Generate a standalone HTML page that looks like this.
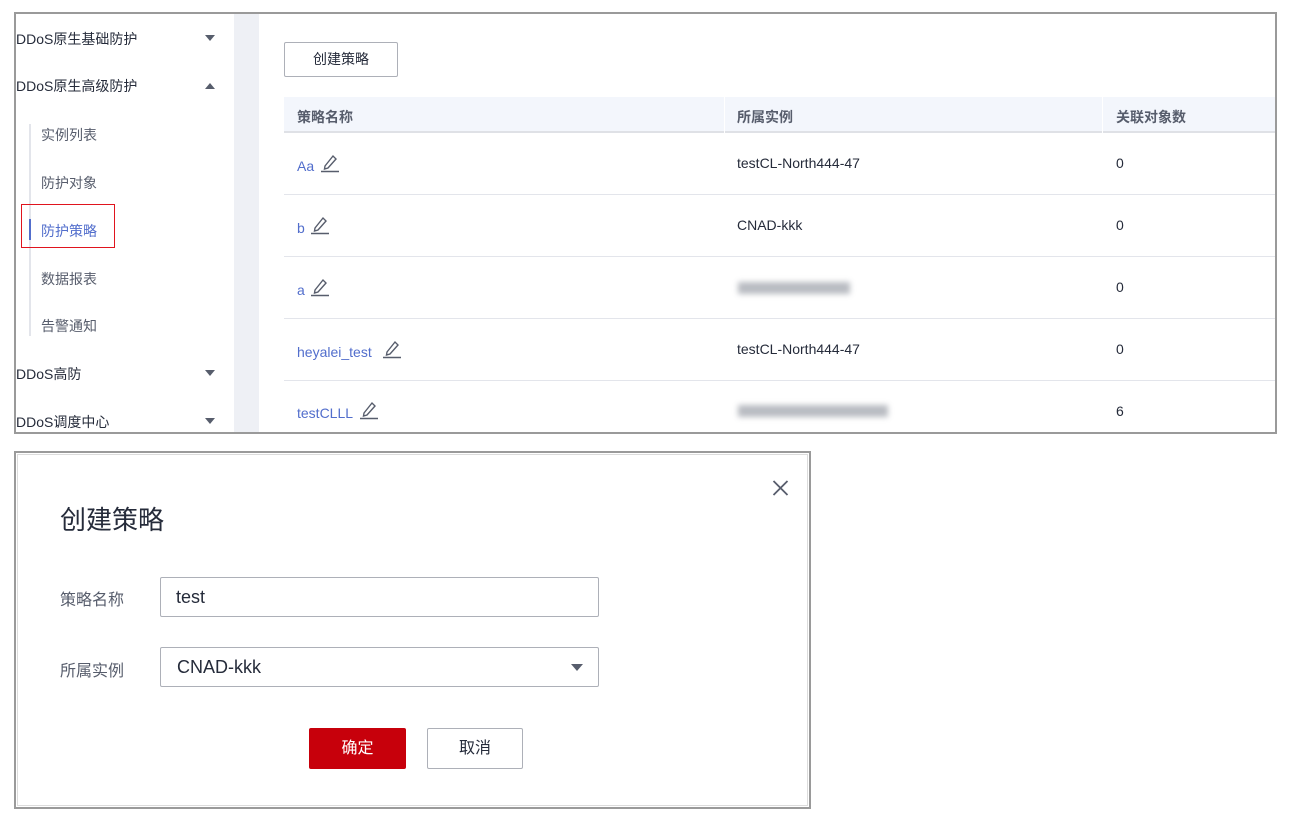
<!DOCTYPE html>
<html><head><meta charset="utf-8"><style>
*{margin:0;padding:0;box-sizing:border-box}
body{width:1292px;height:821px;background:#fff;position:relative;overflow:hidden;font-family:"Liberation Sans","Noto Sans CJK SC",sans-serif;color:#252b3a}
.a{position:absolute;white-space:nowrap}
.top{position:absolute;left:14px;top:12px;width:1263px;height:422px;border:2px solid #9a9a9a;overflow:hidden}
.side{position:absolute;left:0;top:0;width:218px;height:420px;background:#fff}
.strip{position:absolute;left:218px;top:0;width:25px;height:420px;background:#eef0f5}
.nav{font-size:14px;color:#252b3a}
.sub{font-size:14px;color:#575d6c}
.tri{position:absolute;width:0;height:0;border-left:5px solid transparent;border-right:5px solid transparent}
.dn{border-top:6px solid #575d6c}
.up{border-bottom:6px solid #575d6c}
.th{font-size:14px;color:#575d6c;font-weight:bold}
.td{font-size:14px;color:#252b3a}
.lk{font-size:14px;color:#526ecc}
.row{position:absolute;left:268px;width:995px;height:1px;background:#e3e5eb}
.blur{position:absolute;height:12px;background:#8a8f99;filter:blur(3px);opacity:.6}
</style></head><body>
<div class="top">
 <div class="side">
  <div class="a nav" style="left:0;top:15px">DDoS原生基础防护</div>
  <div class="tri dn" style="left:189px;top:21px"></div>
  <div class="a nav" style="left:0;top:62px">DDoS原生高级防护</div>
  <div class="tri up" style="left:189px;top:69px"></div>
  <div style="position:absolute;left:13px;top:110px;width:2px;height:212px;background:#e3e5eb"></div>
  <div style="position:absolute;left:13px;top:205px;width:2px;height:21px;background:#526ecc"></div>
  <div class="a sub" style="left:25px;top:111px">实例列表</div>
  <div class="a sub" style="left:25px;top:159px">防护对象</div>
  <div style="position:absolute;left:5px;top:190px;width:94px;height:44px;border:1px solid #e0141e"></div>
  <div class="a sub" style="left:25px;top:207px;color:#526ecc">防护策略</div>
  <div class="a sub" style="left:25px;top:255px">数据报表</div>
  <div class="a sub" style="left:25px;top:302px">告警通知</div>
  <div class="a nav" style="left:0;top:350px">DDoS高防</div>
  <div class="tri dn" style="left:189px;top:356px"></div>
  <div class="a nav" style="left:0;top:398px">DDoS调度中心</div>
  <div class="tri dn" style="left:189px;top:404px"></div>
 </div>
 <div class="strip"></div>
 <div style="position:absolute;left:268px;top:28px;width:114px;height:35px;border:1px solid #adb0b8;border-radius:2px;font-size:14px;text-align:center;line-height:33px">创建策略</div>
 <div style="position:absolute;left:268px;top:83px;width:995px;height:36px;background:#f3f6fc;border-bottom:2px solid #dfe1e6"></div>
 <div style="position:absolute;left:708px;top:83px;width:1px;height:36px;background:#fff"></div>
 <div style="position:absolute;left:1086px;top:83px;width:1px;height:36px;background:#fff"></div>
 <div class="a th" style="left:281px;top:93px">策略名称</div>
 <div class="a th" style="left:721px;top:93px">所属实例</div>
 <div class="a th" style="left:1100px;top:93px">关联对象数</div>
 <div class="row" style="top:180px"></div>
 <div class="row" style="top:242px"></div>
 <div class="row" style="top:304px"></div>
 <div class="row" style="top:366px"></div>

 <div class="a lk" style="left:281px;top:144px">Aa</div>
 <div class="a lk" style="left:281px;top:206px">b</div>
 <div class="a lk" style="left:281px;top:268px">a</div>
 <div class="a lk" style="left:281px;top:330px">heyalei_test</div>
 <div class="a lk" style="left:281px;top:391px">testCLLL</div>

 <svg class="a" style="left:304px;top:139px" width="20" height="20" viewBox="0 0 20 20"><path d="M5 13 L13 3 L16 6 L8 15 L4.5 16 Z" fill="none" stroke="#575d6c" stroke-width="1.4"/><path d="M1 18.5 H19" stroke="#575d6c" stroke-width="1.6"/></svg>
 <svg class="a" style="left:294px;top:201px" width="20" height="20" viewBox="0 0 20 20"><path d="M5 13 L13 3 L16 6 L8 15 L4.5 16 Z" fill="none" stroke="#575d6c" stroke-width="1.4"/><path d="M1 18.5 H19" stroke="#575d6c" stroke-width="1.6"/></svg>
 <svg class="a" style="left:294px;top:263px" width="20" height="20" viewBox="0 0 20 20"><path d="M5 13 L13 3 L16 6 L8 15 L4.5 16 Z" fill="none" stroke="#575d6c" stroke-width="1.4"/><path d="M1 18.5 H19" stroke="#575d6c" stroke-width="1.6"/></svg>
 <svg class="a" style="left:366px;top:325px" width="20" height="20" viewBox="0 0 20 20"><path d="M5 13 L13 3 L16 6 L8 15 L4.5 16 Z" fill="none" stroke="#575d6c" stroke-width="1.4"/><path d="M1 18.5 H19" stroke="#575d6c" stroke-width="1.6"/></svg>
 <svg class="a" style="left:343px;top:386px" width="20" height="20" viewBox="0 0 20 20"><path d="M5 13 L13 3 L16 6 L8 15 L4.5 16 Z" fill="none" stroke="#575d6c" stroke-width="1.4"/><path d="M1 18.5 H19" stroke="#575d6c" stroke-width="1.6"/></svg>

 <div class="a td" style="left:721px;top:141px">testCL-North444-47</div>
 <div class="a td" style="left:721px;top:203px">CNAD-kkk</div>
 <div class="blur" style="left:722px;top:268px;width:112px"></div>
 <div class="a td" style="left:721px;top:327px">testCL-North444-47</div>
 <div class="blur" style="left:722px;top:391px;width:150px"></div>
 <div class="a td" style="left:1100px;top:141px">0</div>
 <div class="a td" style="left:1100px;top:203px">0</div>
 <div class="a td" style="left:1100px;top:265px">0</div>
 <div class="a td" style="left:1100px;top:327px">0</div>
 <div class="a td" style="left:1100px;top:389px">6</div>
</div>

<div style="position:absolute;left:14px;top:451px;width:797px;height:358px;border:2px solid #9a9a9a;background:#fff">
 <div style="position:absolute;left:1px;top:1px;right:1px;bottom:1px;border:1px solid #dcdcdc"></div>
</div>
<svg class="a" style="left:772px;top:480px" width="17" height="16" viewBox="0 0 17 16"><path d="M1.5 1 L15.5 15 M15.5 1 L1.5 15" stroke="#575d6c" stroke-width="1.8"/></svg>
<div class="a" style="left:60px;top:500px;font-size:26px;color:#252b3a">创建策略</div>
<div class="a" style="left:60px;top:586px;font-size:16px;color:#575d6c">策略名称</div>
<div style="position:absolute;left:160px;top:577px;width:439px;height:40px;border:1px solid #adb0b8;border-radius:2px;font-size:18px;padding-left:15px;line-height:38px">test</div>
<div class="a" style="left:60px;top:657px;font-size:16px;color:#575d6c">所属实例</div>
<div style="position:absolute;left:160px;top:647px;width:439px;height:40px;border:1px solid #adb0b8;border-radius:2px;font-size:18px;padding-left:16px;line-height:38px">CNAD-kkk</div>
<div class="tri dn" style="left:571px;top:664px;border-top-width:7px;border-left-width:6px;border-right-width:6px"></div>
<div style="position:absolute;left:309px;top:728px;width:97px;height:41px;background:#c7000b;border-radius:2px;color:#fff;font-size:16px;text-align:center;line-height:41px">确定</div>
<div style="position:absolute;left:427px;top:728px;width:96px;height:41px;border:1px solid #adb0b8;border-radius:2px;font-size:16px;text-align:center;line-height:39px">取消</div>
</body></html>
